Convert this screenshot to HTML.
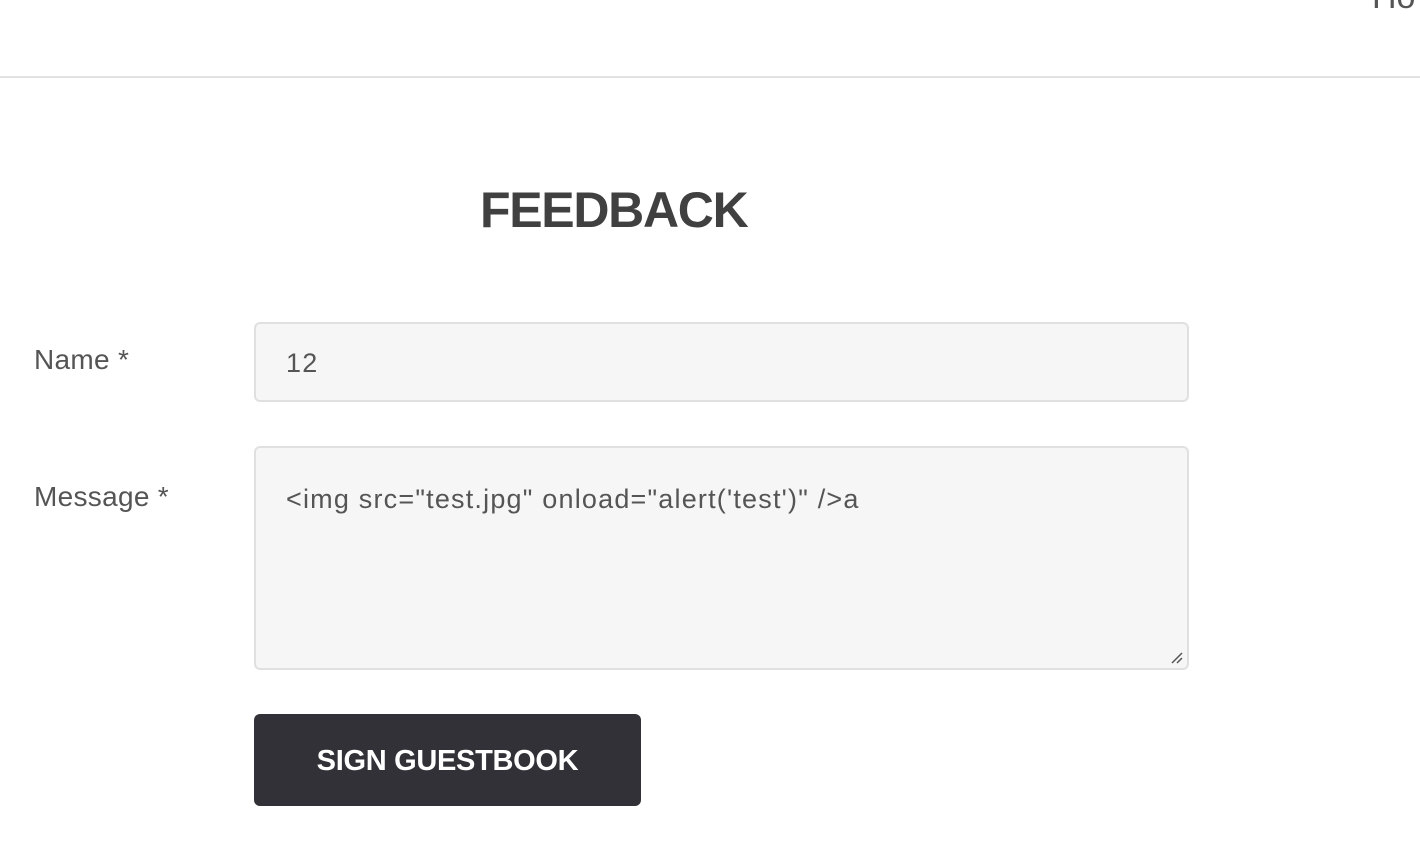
<!DOCTYPE html>
<html><head><style>
body{margin:0;width:1420px;height:862px;overflow:hidden;background:#fff;font-family:"Liberation Sans",sans-serif;color:#555;position:relative}
.hdr{position:absolute;left:0;top:0;width:1420px;height:76px;border-bottom:2px solid #e2e2e2}
.ho{position:absolute;left:1372px;top:-22px;font-size:34px;color:#555}
h1{position:absolute;left:480px;top:183px;margin:0;font-size:50px;font-weight:bold;color:#404040;letter-spacing:-1.3px;line-height:54px}
.lbl{position:absolute;left:34px;font-size:28px;color:#555;letter-spacing:0.3px}
.box{position:absolute;left:254px;width:935px;background:#f6f6f6;border:2px solid #e0e0e0;border-radius:6px;box-sizing:border-box;font-size:27px;color:#555;padding-left:30px;letter-spacing:1.2px}
.btn{position:absolute;left:254px;top:714px;width:387px;height:92px;background:#323137;border-radius:6px;color:#fff;font-weight:bold;font-size:29px;text-align:center;line-height:94px;letter-spacing:-0.3px}
</style></head><body>
<div class="hdr"><div class="ho">Ho</div></div>
<h1>FEEDBACK</h1>
<div class="lbl" style="top:344px">Name *</div>
<div class="box" style="top:322px;height:80px;line-height:78px">12</div>
<div class="lbl" style="top:481px">Message *</div>
<div class="box" style="top:446px;height:224px;padding-top:36px;line-height:30px">&lt;img src="test.jpg" onload="alert('test')" /&gt;a
<svg style="position:absolute;right:3px;bottom:3px" width="14" height="14"><path d="M2 12L12 2M7 12L12 7" stroke="#555" stroke-width="1.5"/></svg></div>
<div class="btn">SIGN GUESTBOOK</div>
</body></html>
